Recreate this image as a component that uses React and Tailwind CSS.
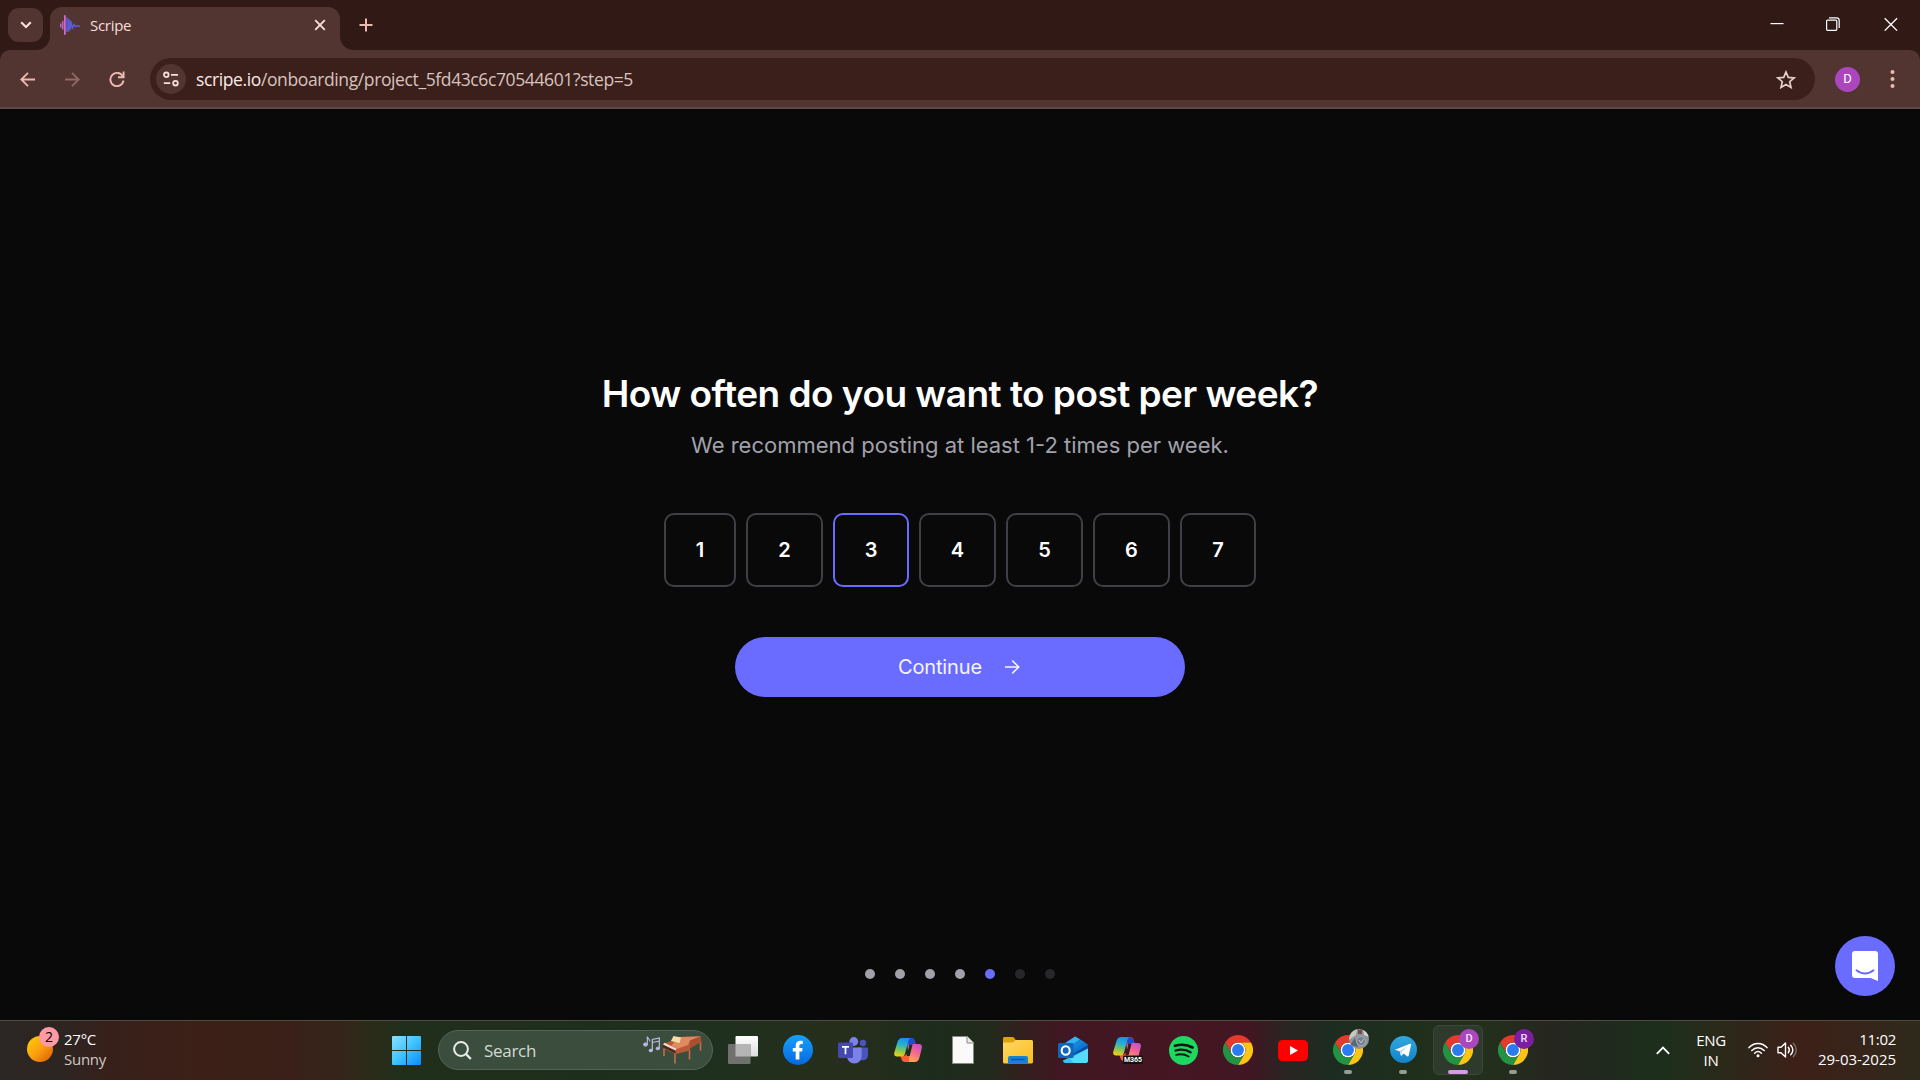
import React from "react";

const SEG = "font-['Open_Sans','Noto_Sans',sans-serif]";
const GEIST = "font-['Inter',sans-serif]";

function TabFlare({ flip }) {
  return (
    <svg viewBox="0 0 14 14" className={flip ? "h-[14px] w-[14px] -scale-x-100" : "h-[14px] w-[14px]"}>
      <path d="M14 0v14H0C8 14 14 8 14 0z" fill="#523431" />
    </svg>
  );
}

function TitleBar() {
  return (
    <div className="flex h-[50px] shrink-0 items-start bg-[#311a16]">
      <div className="ml-2 mt-2 flex h-[34px] w-[35px] items-center justify-center rounded-[11px] bg-[#523431]">
        <svg width="12" height="8" viewBox="0 0 12 8" fill="none" stroke="#f5dfdb" strokeWidth="2.2">
          <path d="M1.2 1.2 6 6l4.800-4.800" />
        </svg>
      </div>
      <div className="-ml-[7px] mt-[36px]">
        <TabFlare />
      </div>
      <div className="mt-[7px] flex h-[43px] w-[290px] items-center rounded-t-[12px] bg-[#523431] pl-[10px] pr-[14px] pb-[7px]">
        <svg width="20" height="20" viewBox="0 0 20 20" fill="none" strokeLinecap="round">
          <path d="M.8 9v3M2.800 6.500v7.500" stroke="#d46adf" strokeWidth="1.300" />
          <path d="M4.900.8v18.400" stroke="#e573ea" strokeWidth="1.500" />
          <path d="M7 3v13.500M8.800 4.500v11.500M10.500 7v7" stroke="#5a5fd8" strokeWidth="1.600" />
          <path d="M10.500 6l2 7 1.500-3.500 1.500 2 1.500-.8 2.500.5" stroke="#5a5fd8" strokeWidth="1.400" />
        </svg>
        <span className={`ml-[10px] -mt-px whitespace-nowrap text-[15px] leading-5 tracking-[-0.3px] text-[#f5dfdb] ${SEG}`}>
          Scripe
        </span>
        <svg className="ml-auto" width="12" height="12" viewBox="0 0 12 12" stroke="#f5dfdb" strokeWidth="1.900">
          <path d="M1.200 1.200l9.600 9.600M10.800 1.200l-9.600 9.600" />
        </svg>
      </div>
      <div className="mt-[36px]">
        <TabFlare flip />
      </div>
      <svg className="ml-[5px] mt-[18px]" width="14" height="14" viewBox="0 0 14 14" stroke="#ecbab2" strokeWidth="2">
        <path d="M7 .5v13M.5 7h13" />
      </svg>
      <div className="ml-auto mr-[22px] mt-[17px] flex items-center">
        <svg width="14" height="14" viewBox="0 0 14 14" stroke="#fff" strokeWidth="1.200">
          <path d="M.5 6.600h13" />
        </svg>
        <svg className="ml-[42px]" width="14" height="14" viewBox="0 0 14 14" fill="none" stroke="#fff" strokeWidth="1.200">
          <rect x=".6" y="3.100" width="10.200" height="10.200" rx="1" />
          <path d="M3 .8h7.500a2.700 2.700 0 0 1 2.700 2.700V11" />
        </svg>
        <svg className="ml-[44px]" width="14" height="14" viewBox="0 0 14 14" stroke="#fff" strokeWidth="1.300">
          <path d="M.7 1.200l12.400 12.400M13.100 1.200L.7 13.600" />
        </svg>
      </div>
    </div>
  );
}

function Toolbar() {
  return (
    <div className="h-[59px] shrink-0 bg-[#311a16]">
      <div className="flex h-[59px] items-center rounded-t-[10px] border-b-2 border-[#5c4a46] bg-[#523431] pt-px">
        <svg className="ml-[20px]" width="15" height="15" viewBox="0 0 15 15" fill="none" stroke="#ecbab2" strokeWidth="1.800">
          <path d="M15 7.500H1.500M8 .8L1.300 7.500 8 14.200" />
        </svg>
        <svg className="ml-[30px]" width="15" height="15" viewBox="0 0 15 15" fill="none" stroke="#8f6964" strokeWidth="1.800">
          <path d="M0 7.500h13.500M7 .8l6.700 6.700L7 14.200" />
        </svg>
        <svg className="ml-[29px]" width="16" height="16" viewBox="0 0 16 16" fill="none" stroke="#ecbab2" strokeWidth="1.900">
          <path d="M14 5.800A6.600 6.600 0 1 0 14.500 9.500" />
          <path d="M14.600.6v5.600H9" />
        </svg>
        <div className="ml-[25px] flex h-[42px] w-[1665px] items-center rounded-full bg-[#3a1f1b] pl-[6px] pr-[19px]">
          <div className="flex h-[30px] w-[30px] items-center justify-center rounded-full bg-[#523431]">
            <svg width="16" height="16" viewBox="0 0 16 16" fill="none" stroke="#f5dfdb" strokeWidth="1.800">
              <circle cx="3.300" cy="3.800" r="2.300" />
              <path d="M8 3.800h7M.8 12.200h6.400" />
              <circle cx="12.500" cy="12.200" r="2.300" />
            </svg>
          </div>
          <span className={`ml-[10px] whitespace-nowrap text-[17.500px] leading-6 tracking-[-0.385px] text-[#d8c3bf] ${SEG}`}>
            <span className="text-[#fbeae7]">scripe.io</span>
            /onboarding/project_5fd43c6c70544601?step=5
          </span>
          <svg className="ml-auto" width="20" height="19" viewBox="0 0 20 19" fill="none" stroke="#e6cfca" strokeWidth="1.700">
            <path d="M10 2l2.300 5.400 5.800.5-4.400 3.800 1.300 5.700-5-3-5 3 1.300-5.700L1.900 7.900l5.800-.5z" />
          </svg>
        </div>
        <div className="ml-[20px] flex h-[25px] w-[25px] items-center justify-center rounded-full bg-[#ab47bc] font-['Roboto',sans-serif] text-[13px] text-white">
          D
        </div>
        <svg className="ml-[30px]" width="5" height="18" viewBox="0 0 5 18" fill="#ecbab2">
          <circle cx="2.500" cy="2" r="2" />
          <circle cx="2.500" cy="9" r="2" />
          <circle cx="2.500" cy="16" r="2" />
        </svg>
      </div>
    </div>
  );
}

const OPTIONS = [
  { n: 1, w: "w-[72px]" },
  { n: 2, w: "w-[77px]" },
  { n: 3, w: "w-[76px]" },
  { n: 4, w: "w-[77px]" },
  { n: 5, w: "w-[77px]" },
  { n: 6, w: "w-[77px]" },
  { n: 7, w: "w-[76px]" },
];

const DOTS = ["bg-[#a1a1aa]", "bg-[#a1a1aa]", "bg-[#a1a1aa]", "bg-[#a1a1aa]", "bg-[#6a6cff]", "bg-[#27272a]", "bg-[#27272a]"];

function Onboarding() {
  return (
    <div className={`relative flex h-[911px] shrink-0 flex-col items-center bg-[#09090a] pt-[262px] ${GEIST}`}>
      <h1 className="h-[45px] whitespace-nowrap text-[37px] font-semibold leading-[45px] tracking-[-0.53px] text-white">
        How often do you want to post per week?
      </h1>
      <p className="mt-[12px] h-[34px] whitespace-nowrap text-[22px] leading-[34px] text-[#a1a1aa]">
        We recommend posting at least 1-2 times per week.
      </p>
      <div className="mt-[51px] flex gap-[10px]">
        {OPTIONS.map((o) => (
          <button
            key={o.n}
            className={`${o.w} h-[74px] rounded-[10px] border-2 text-[20px] font-semibold text-white ${
              o.n === 3 ? "border-[#6a6cff]" : "border-[#3f3f46]"
            }`}
          >
            {o.n}
          </button>
        ))}
      </div>
      <button className="mt-[50px] flex h-[60px] w-[450px] items-center rounded-full bg-[#6a6cff] pl-[163px] text-[20px] text-[#f5f5ff]">
        <span className="tracking-[-0.15px]">Continue</span>
        <svg className="ml-[23px]" width="15" height="14" viewBox="0 0 15 14" fill="none" stroke="#f5f5ff" strokeWidth="1.500">
          <path d="M0 7h13.800M7.300.6L13.800 7l-6.500 6.400" />
        </svg>
      </button>
      <div className="mt-[272px] flex gap-5">
        {DOTS.map((c, i) => (
          <span key={i} className={`h-[10px] w-[10px] rounded-full ${c}`} />
        ))}
      </div>
      <div className="absolute bottom-[24px] right-[25px] flex h-[60px] w-[60px] items-center justify-center rounded-full bg-[#6a6cff]">
        <svg width="26" height="30" viewBox="0 0 26 30">
          <path d="M3 0h20a3 3 0 0 1 3 3v27l-7.500-3H3a3 3 0 0 1-3-3V3a3 3 0 0 1 3-3z" fill="#fff" />
          <path d="M4.500 19.300c5 4.200 12 4.200 17 0" fill="none" stroke="#6a6cff" strokeWidth="1.900" strokeLinecap="round" />
        </svg>
      </div>
    </div>
  );
}

function Chrome() {
  return (
    <svg width="30" height="30" viewBox="0 0 48 48">
      <circle cx="24" cy="24" r="12" fill="#fff" />
      <path d="M24 12h20.780a24 24 0 0 0-41.563.003L13.608 30l.009-.002A11.985 11.985 0 0 1 24 12z" fill="#e33b2e" />
      <path d="M34.391 30.003L24 48a23.994 23.994 0 0 0 20.780-35.997H23.999l-.003.009a11.985 11.985 0 0 1 10.395 17.991z" fill="#fcc415" />
      <path d="M13.609 30.003L3.218 12.006A23.994 23.994 0 0 0 24.003 48l10.390-17.997-.007-.007a11.985 11.985 0 0 1-20.777.007z" fill="#229342" />
      <circle cx="24" cy="24" r="9.500" fill="#2a7bf0" />
    </svg>
  );
}

function ChromeProfile({ children }) {
  return (
    <div className="relative h-[30px] w-[30px]">
      <Chrome />
      <div className="absolute -right-[6px] -top-[6px]">{children}</div>
    </div>
  );
}

function Copilot({ id, m365 }) {
  return (
    <svg width={m365 ? 30 : 28} height={m365 ? 28 : 26} viewBox={m365 ? "0 0 30 28" : "0 0 28 26"} className={m365 ? "" : "mb-px"}>
      <defs>
        <linearGradient id={`${id}a`} x1=".5" y1="0" x2=".3" y2="1">
          <stop offset="0" stopColor="#1a8ff0" />
          <stop offset=".35" stopColor="#25b3d0" />
          <stop offset=".65" stopColor="#7fc45a" />
          <stop offset="1" stopColor="#f4d010" />
        </linearGradient>
        <linearGradient id={`${id}b`} x1=".6" y1="0" x2=".3" y2="1">
          <stop offset="0" stopColor="#a04ee8" />
          <stop offset=".5" stopColor="#f0609a" />
          <stop offset="1" stopColor="#ffa84c" />
        </linearGradient>
      </defs>
      <path d="M13 1h4.500c1.600 0 2.500 1 3 2.500L21.600 7H25c2.400 0 3.400 1.800 2.800 4l-2.500 10c-.7 2.500-2 4-4.500 4h-6z" fill={`url(#${id}b)`} />
      <path d="M13 1h4.500c1.600 0 2.500 1 3 2.500L21.600 7h-3c-2 0-3 1.200-3.500 3z" fill="#1a4fd0" />
      <path d="M15 25H11c-2 0-3-1-3.500-2.800L6.500 19H9c1.500 0 2.600-.7 3.200-2l3.300 2-.5 2.500z" fill="#f2603c" />
      <path d="M8.500 1H17c-1.500.4-2.300 1.600-2.800 3.500l-3 11.500C10.500 18.500 9.500 19.500 7.500 19.500H3C.7 19.500-.3 17.700.3 15.500L3.500 5C4.300 2.500 5.800 1 8.500 1z" fill={`url(#${id}a)`} />
      <path d="M15.600 7.500h3L15.700 19h-3.200z" fill={m365 ? "#451623" : "#1e2c1c"} />
      {m365 && (
        <>
          <rect x="10" y="19.500" width="20" height="8.500" rx="1.500" fill="#111" />
          <text x="11" y="26.300" fontSize="7" fontWeight="700" fill="#fff" textLength="18" fontFamily="Roboto">
            M365
          </text>
        </>
      )}
    </svg>
  );
}

function Teams() {
  return (
    <svg width="30" height="27" viewBox="0 0 30 27">
      <circle cx="25" cy="6" r="3.200" fill="#4b53bc" />
      <circle cx="15.800" cy="4.500" r="4.400" fill="#7b83eb" />
      <path d="M20 10.500h8.800c.7 0 1.200.5 1.200 1.200v6.500a5.300 5.300 0 0 1-9 3.700z" fill="#4b53bc" />
      <path d="M9 10.500h13.500c.7 0 1.200.5 1.200 1.200v7.500a7.300 7.300 0 0 1-14.700 0z" fill="#7b83eb" />
      <rect x="0" y="5.500" width="15" height="15.500" rx="1.300" fill="#4448b0" />
      <path d="M4 9.800h7M7.500 9.800v7.500" stroke="#fff" strokeWidth="1.700" fill="none" />
    </svg>
  );
}

function Outlook() {
  return (
    <svg width="30" height="28" viewBox="0 0 30 28">
      <path d="M5 8.500L16 1.200c.8-.5 1.700-.5 2.500 0L30 8.500V15L17 21 5 15z" fill="#0f78d4" />
      <path d="M16 1.200c.8-.5 1.700-.5 2.500 0L22 3.500 10 11.500 5 8.500z" fill="#32b4ee" />
      <path d="M22 3.500l4.500 2.800L14 14.500l-4-3z" fill="#1585dc" />
      <path d="M30 8.500v5L17 21.500l-3-3 13-8z" fill="#0a4da0" />
      <path d="M30 12.500V24.500c0 1.400-1 2.500-2.500 2.500h-20C6 27 5 26 5 24.500z" fill="#35c5f0" />
      <path d="M30 12.500L12 23l4 4h11.500c1.500 0 2.500-1 2.500-2.500z" fill="#58dbf8" />
      <rect x="0" y="7" width="15.500" height="15" rx="1.300" fill="#1066b8" />
      <ellipse cx="7.700" cy="14.500" rx="4" ry="4.300" fill="none" stroke="#fff" strokeWidth="2.100" />
    </svg>
  );
}

const APPS = [
  {
    id: "taskview",
    icon: (
      <svg width="30" height="28" viewBox="0 0 30 28">
        <defs>
          <linearGradient id="tv" x1="0" y1="0" x2="0" y2="1">
            <stop offset="0" stopColor="#fff" />
            <stop offset="1" stopColor="#dcdcdc" />
          </linearGradient>
        </defs>
        <rect x="7.500" y="0" width="22.500" height="20.500" rx="1" fill="url(#tv)" />
        <rect x="0" y="8" width="22.500" height="20" rx="1" fill="#70706f" />
        <rect x="7.500" y="8" width="15" height="12.500" fill="#b5b5b5" />
      </svg>
    ),
  },
  {
    id: "facebook",
    icon: (
      <svg width="30" height="30" viewBox="0 0 30 30">
        <defs>
          <linearGradient id="fb" x1="0" y1="0" x2="0" y2="1">
            <stop offset="0" stopColor="#18a0fa" />
            <stop offset="1" stopColor="#0668e2" />
          </linearGradient>
        </defs>
        <circle cx="15" cy="15" r="15" fill="url(#fb)" />
        <path d="M12.700 24.500V16.600H9.800v-3.500h2.900v-2.400c0-3.300 1.700-5 4.800-5 .8 0 1.700.1 2.300.2v3.200h-1.500c-1.500 0-1.900.7-1.900 1.800v2.200h3.200l-.5 3.500h-2.700v7.900z" fill="#fff" />
      </svg>
    ),
  },
  { id: "teams", icon: <Teams /> },
  { id: "copilot", icon: <Copilot id="cp" /> },
  {
    id: "document",
    icon: (
      <svg width="22" height="28" viewBox="0 0 22 28">
        <path d="M.5.5h15l6 6v21H.5z" fill="#fafafa" stroke="#8a8a80" />
        <path d="M15 .5V7h6.500" fill="#e8e8e8" stroke="#8a8a80" />
      </svg>
    ),
  },
  {
    id: "explorer",
    icon: (
      <svg width="30" height="27" viewBox="0 0 30 27">
        <defs>
          <linearGradient id="fo" x1="0" y1="0" x2="1" y2="1">
            <stop offset="0" stopColor="#ffd968" />
            <stop offset="1" stopColor="#fbbc1a" />
          </linearGradient>
        </defs>
        <path d="M0 1.500C0 .7.700 0 1.500 0h8c.7 0 1.200.2 1.600.7L13 3.500V10H0z" fill="#e0a010" />
        <path d="M0 5.500h10l2.500-2.500H28.500c.8 0 1.500.7 1.500 1.500V25c0 .8-.7 1.500-1.500 1.500h-27C.7 26.500 0 25.800 0 25z" fill="url(#fo)" />
        <path d="M5 26.500v-5.500a2 2 0 0 1 2-2h16a2 2 0 0 1 2 2v5.500z" fill="#1582d4" />
        <path d="M9 22.500h12" stroke="#0c5a9e" strokeWidth="1.300" strokeLinecap="round" />
      </svg>
    ),
  },
  { id: "outlook", icon: <Outlook /> },
  { id: "m365", icon: <Copilot id="mc" m365 /> },
  {
    id: "spotify",
    icon: (
      <svg width="29" height="29" viewBox="0 0 29 29" fill="none" stroke="#10150f" strokeLinecap="round">
        <circle cx="14.500" cy="14.500" r="14.500" fill="#1ed760" stroke="none" />
        <path d="M6 9.800c6-1.700 12.500-1.200 17.500 1.700" strokeWidth="2.700" />
        <path d="M6.600 14.500c5-1.400 10.500-.9 15 1.800" strokeWidth="2.300" />
        <path d="M7.200 18.900c4.200-1.100 8.500-.7 12.400 1.600" strokeWidth="1.900" />
      </svg>
    ),
  },
  { id: "chrome", icon: <Chrome /> },
  {
    id: "youtube",
    icon: (
      <svg width="30" height="21" viewBox="0 0 30 21">
        <rect width="30" height="21" rx="4.500" fill="#f00" />
        <path d="M12 6l8 4.500-8 4.500z" fill="#fff" />
      </svg>
    ),
  },
  {
    id: "chrome-photo",
    run: true,
    icon: (
      <ChromeProfile>
        <svg width="20" height="20" viewBox="0 0 20 20">
          <defs>
            <clipPath id="ph">
              <circle cx="10" cy="10" r="10" />
            </clipPath>
          </defs>
          <g clipPath="url(#ph)">
            <rect width="20" height="20" fill="#8d949c" />
            <path d="M0 0h8l-1 6-7 5z" fill="#c4c9bd" />
            <path d="M14 0h6v8l-5-2z" fill="#d5d6d2" />
            <path d="M9 1h4v4H9z" fill="#7a4a3c" />
            <path d="M1 16l5-7 3 9z" fill="#5e6672" />
            <circle cx="12" cy="12" r="4.500" fill="#75808e" stroke="#a5acb5" />
            <path d="M10 11l2 3 2.500-4" stroke="#c5cbd2" fill="none" />
          </g>
        </svg>
      </ChromeProfile>
    ),
  },
  {
    id: "telegram",
    run: true,
    icon: (
      <svg className="mb-px" width="27" height="27" viewBox="0 0 27 27">
        <defs>
          <linearGradient id="tg" x1="0" y1="0" x2="0" y2="1">
            <stop offset="0" stopColor="#31a8e2" />
            <stop offset="1" stopColor="#1383c4" />
          </linearGradient>
        </defs>
        <circle cx="13.500" cy="13.500" r="13.500" fill="url(#tg)" />
        <path d="M5.500 13.400L20 7.800c.8-.3 1.300.2 1.100 1.100l-2.400 10.700c-.2.900-.8 1-1.500.6l-3.700-2.700-1.900 1.900c-.5.5-.9.3-1-.3l-.9-3.900-4.100-1.200c-.8-.2-.8-.4-.1-.6z" fill="#fff" />
        <path d="M9.700 15.200l8-5.200-6 6-.5 3z" fill="#b9d8ea" />
      </svg>
    ),
  },
  {
    id: "chrome-d",
    active: true,
    icon: (
      <ChromeProfile>
        <span className="flex h-5 w-5 items-center justify-center rounded-full bg-[#ab47bc] font-['Roboto',sans-serif] text-[11px] font-medium text-[#f6e3f9]">
          D
        </span>
      </ChromeProfile>
    ),
  },
  {
    id: "chrome-r",
    run: true,
    icon: (
      <ChromeProfile>
        <span className="flex h-5 w-5 items-center justify-center rounded-full bg-[#7b1fa2] font-['Roboto',sans-serif] text-[11px] font-medium text-[#f0def6]">
          R
        </span>
      </ChromeProfile>
    ),
  },
];

function Taskbar() {
  return (
    <div
      className={`flex h-[60px] shrink-0 border-t border-[#504c3e] text-white ${SEG} bg-[linear-gradient(90deg,#2b2725_0px,#2e2420_70px,#38201a_110px,#3c2018_200px,#3a2018_290px,#33251a_345px,#2a2b19_370px,#1f2f1b_405px,#1e2e1c_600px,#20301e_730px,#262e1b_850px,#1c2c1c_930px,#222a1c_990px,#331f1d_1025px,#401722_1060px,#451623_1180px,#411622_1250px,#2a2422_1285px,#1d2c20_1330px,#1f2f1c_1420px,#22301b_1480px,#26261f_1550px,#20291d_1600px,#1c2f1b_1660px,#262b1a_1700px,#30251a_1750px,#3d2018_1800px,#38231a_1850px,#2f2a1c_1920px)]`}
    >
      <div className="flex w-[392px] pl-[27px]">
        <div className="relative mt-[15px] h-[26px] w-[26px] rounded-full bg-linear-135 from-[#ffd200] via-[#f9a010] to-[#dd5205]">
          <span className="absolute -top-[9px] left-[12px] flex h-5 w-5 items-center justify-center rounded-full bg-[#ff99a4] text-[14px] leading-5 text-black">
            2
          </span>
        </div>
        <div className="ml-[11px] mt-[8px] text-[15px] leading-[20px] tracking-[-0.25px]">
          <div>27°C</div>
          <div className="text-[#cfc9c5]">Sunny</div>
        </div>
      </div>
      <svg className="mt-[15px]" width="29" height="29" viewBox="0 0 29 29">
        <defs>
          <linearGradient id="win" gradientUnits="userSpaceOnUse" x1="0" y1="0" x2="29" y2="29">
            <stop offset="0" stopColor="#8be2ff" />
            <stop offset=".5" stopColor="#3fc3ff" />
            <stop offset="1" stopColor="#0a8cff" />
          </linearGradient>
        </defs>
        <path d="M0 1a1 1 0 0 1 1-1h13v14H0zM15 0h13a1 1 0 0 1 1 1v13H15zM0 15h14v14H1a1 1 0 0 1-1-1zM15 15h14v13a1 1 0 0 1-1 1H15z" fill="url(#win)" />
      </svg>
      <div className="ml-[17px] mt-[9px] flex h-10 w-[275px] items-center rounded-full border border-[#55645a] bg-[#3b4d3c] pl-[14px]">
        <svg width="19" height="19" viewBox="0 0 19 19" fill="none" stroke="#e8ece9">
          <circle cx="8" cy="8" r="6.900" strokeWidth="2" />
          <path d="M13 13l4.800 5" strokeWidth="2.400" />
        </svg>
        <span className="ml-[12px] mt-0.5 text-[17px] tracking-[-0.3px] text-[#d3dad4]">Search</span>
        <svg className="ml-auto mr-[10px]" width="60" height="30" viewBox="0 0 60 30">
          <g fill="#bdbbe6" stroke="#bdbbe6">
            <ellipse cx="3.500" cy="9.500" rx="2" ry="1.600" />
            <path d="M5.300 9.500V1.500c.3 2 2.700 2.500 2.500 5" fill="none" strokeWidth="1.100" />
            <ellipse cx="8.800" cy="15.500" rx="1.700" ry="1.300" />
            <ellipse cx="15.800" cy="13.500" rx="1.700" ry="1.300" />
            <path d="M10.300 15.500V4.500l7-1.500v10.500M10.300 7.500l7-1.500" fill="none" strokeWidth="1.200" />
          </g>
          <path d="M22 14v7M33 18v10.500M47.500 14v10.500M58.500 6v9.500" stroke="#c0704a" strokeWidth="1.600" />
          <path d="M21 9l16-6 22-1.500v6L48 10.500v5L34 19 21 13.500z" fill="#b85a36" />
          <path d="M37 2l22-.8L48 5.500 46 10l-11 4-6-3z" fill="#e08a62" />
          <path d="M21 9.500l12.500 6v3L21 12.500z" fill="#4a2a20" />
          <path d="M22.500 7.800l12 6-1 1.700L21 9.500z" fill="#e8ddd4" />
          <path d="M29 6l2.500-5 7.500 1.500L37.500 8z" fill="#f2dfa8" />
          <path d="M48 5.500v8l11-6.500V1.200z" fill="#a84f30" />
        </svg>
      </div>
      <div className="ml-[5px] flex gap-[5px] pt-[4px]">
        {APPS.map((a) => (
          <div
            key={a.id}
            className={`relative flex h-[50px] w-[50px] items-center justify-center rounded-md ${
              a.active ? "border border-[#3b4739] bg-[#2e3a2b]" : ""
            }`}
          >
            {a.icon}
            {a.run && <span className="absolute bottom-[1px] h-1 w-2 rounded-full bg-[#949c93]" />}
            {a.active && <span className="absolute bottom-0 h-1 w-5 rounded-full bg-[#d99be6]" />}
          </div>
        ))}
      </div>
      <div className="ml-auto flex pr-[24px]">
        <svg className="mt-[25px]" width="14" height="9" viewBox="0 0 14 9" fill="none" stroke="#fff" strokeWidth="1.800">
          <path d="M.8 7.800L7 1.500l6.200 6.300" />
        </svg>
        <div className="ml-[26px] mt-[9px] w-[30px] text-center text-[15px] leading-[20px] tracking-[-0.3px]">
          <div>ENG</div>
          <div>IN</div>
        </div>
        <svg className="ml-[22px] mt-[21px]" width="20" height="16" viewBox="0 0 20 16" fill="none" stroke="#fff" strokeWidth="1.500" strokeLinecap="round">
          <path d="M1 5.600c5-5.500 13-5.500 18 0M3.800 8.500c3.600-3.800 8.800-3.800 12.400 0M6.600 11.200c2-2 4.800-2 6.800 0" />
          <circle cx="10" cy="13.700" r="1.500" fill="#fff" stroke="none" />
        </svg>
        <svg className="ml-[9px] mt-[20px]" width="21" height="18" viewBox="0 0 21 18" fill="none" stroke="#fff" strokeWidth="1.400" strokeLinecap="round" strokeLinejoin="round">
          <path d="M1 6.300h3L8.500 2v14L4 11.700H1z" />
          <path d="M11.300 6.300c1.300 1.700 1.300 3.700 0 5.400M13.700 4.200c2.700 3 2.700 6.600 0 9.600" />
          <path d="M16.300 2.200c4 4 4 9.600 0 13.600" stroke="#7d7068" />
        </svg>
        <div className="ml-[20px] mt-[8px] w-[78px] text-right text-[15px] leading-[20px]">
          <div className="tracking-[-0.3px]">11:02</div>
          <div className="whitespace-nowrap tracking-[-0.03px]">29-03-2025</div>
        </div>
      </div>
    </div>
  );
}

export default function App() {
  return (
    <div className="flex h-[1080px] w-[1920px] flex-col overflow-hidden bg-[#09090a]">
      <TitleBar />
      <Toolbar />
      <Onboarding />
      <Taskbar />
    </div>
  );
}
